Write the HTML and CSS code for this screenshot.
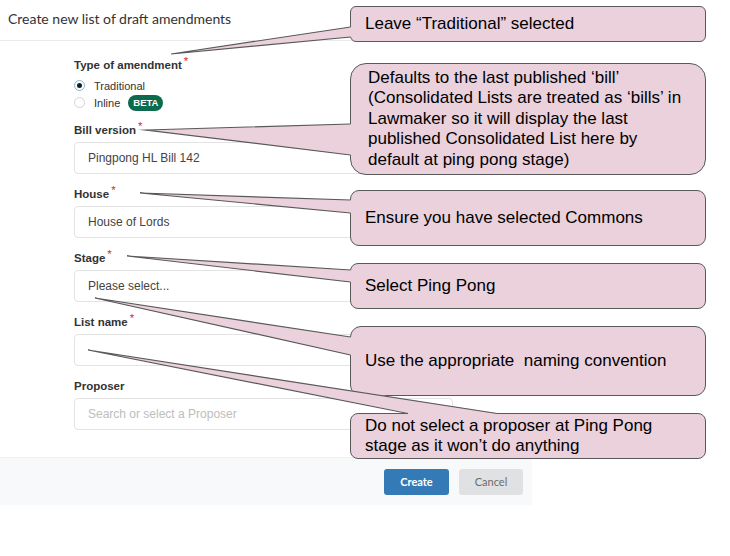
FILE: index.html
```html
<!DOCTYPE html>
<html lang="en">
<head>
  <meta charset="UTF-8">
  <meta name="viewport" content="width=device-width, initial-scale=1.0">
  <title>Create new list of draft amendments</title>
  <link rel="stylesheet" href="styles.css">
</head>
<body>
  <div class="modal">
    <div class="modal-header">
      <h1 class="modal-title">Create new list of draft amendments</h1>
    </div>

    <div class="modal-body">
      <!-- Type of amendment -->
      <div class="field field-radios">
        <div class="field-label">Type of amendment<span class="req">*</span></div>
        <div class="radio-row"><span class="radio checked"></span>Traditional</div>
        <div class="radio-row"><span class="radio"></span>Inline<span class="badge">BETA</span></div>
      </div>

      <div class="field">
        <div class="field-label">Bill version<span class="req">*</span></div>
        <div class="input">Pingpong HL Bill 142</div>
      </div>

      <div class="field">
        <div class="field-label">House<span class="req">*</span></div>
        <div class="input">House of Lords</div>
      </div>

      <div class="field">
        <div class="field-label">Stage<span class="req">*</span></div>
        <div class="input">Please select...</div>
      </div>

      <div class="field">
        <div class="field-label">List name<span class="req">*</span></div>
        <div class="input"></div>
      </div>

      <div class="field">
        <div class="field-label">Proposer</div>
        <div class="input placeholder">Search or select a Proposer</div>
      </div>
    </div>

    <div class="modal-footer">
      <button class="btn btn-primary">Create</button>
      <button class="btn btn-secondary">Cancel</button>
    </div>
  </div>

  <!-- Annotation callouts -->
  <div class="notes">
    <div class="note note-1">Leave “Traditional” selected</div>
    <div class="note note-2">Defaults to the last published ‘bill’<br>(Consolidated Lists are treated as ‘bills’ in<br>Lawmaker so it will display the last<br>published Consolidated List here by<br>default at ping pong stage)</div>
    <div class="note note-3">Ensure you have selected Commons</div>
    <div class="note note-4">Select Ping Pong</div>
    <div class="note note-5">Use the appropriate&nbsp; naming convention</div>
    <div class="note note-6">Do not select a proposer at Ping Pong<br>stage as it won’t do anything</div>

    <svg class="tails" width="730" height="556" viewBox="0 0 730 556">
      <g class="tail-fill">
        <polygon points="171,54 350,27 353,27 353,37 350,37"/>
        <polygon points="146,130 350,124 353,124 353,155 350,155"/>
        <polygon points="140,193 350,200 353,200 353,213 350,213"/>
        <polygon points="127,256 350,270 353,270 353,282 350,282"/>
        <polygon points="95,298 350,337 353,337 353,355 350,355"/>
        <polygon points="88,350 408,413 408,416 497,416 497,413"/>
      </g>
      <g class="tail-line">
        <polyline points="350.5,27 171,54 350.5,37"/>
        <polyline points="350.5,124 146,130 350.5,155"/>
        <polyline points="350.5,200 140,193 350.5,213"/>
        <polyline points="350.5,270 127,256 350.5,282"/>
        <polyline points="350.5,337 95,298 350.5,355"/>
        <polyline points="408,413.5 88,350 497,413.5"/>
      </g>
    </svg>
  </div>
</body>
</html>
```

FILE: styles.css
```css
/* General Styles */
body {
  margin: 0;
  padding: 0;
  background-color: #fff;
  color: #333;
  font-family: "Liberation Sans", Arial, sans-serif;
}

.modal {
  width: 532px;
}

.modal-header {
  height: 41px;
  border-bottom: 1px solid #ebebeb;
  box-sizing: border-box;
}

.modal-title {
  margin: 0;
  padding-left: 8px;
  font-family: Lato, "Liberation Sans", sans-serif;
  font-size: 14px;
  font-weight: 400;
  line-height: 38px;
  color: #333;
}

.modal-body {
  padding: 16px 79px 15px 74px;
}

/* Form fields */
.field {
  margin-bottom: 12px;
}

.field-radios {
  margin-bottom: 11px;
}

.field-label {
  font-size: 11.5px;
  font-weight: bold;
  line-height: 16px;
  margin-bottom: 4px;
  color: #333;
}

.req {
  position: relative;
  top: -4px;
  margin-left: 2px;
  color: #db2828;
  font-weight: normal;
}

.radio-row {
  display: flex;
  align-items: center;
  height: 17px;
  font-size: 11px;
  color: #333;
}

.radio {
  width: 11px;
  height: 11px;
  margin-right: 9px;
  border: 1px solid #d4d4d5;
  border-radius: 50%;
  box-sizing: border-box;
  position: relative;
}

.radio.checked {
  border-color: #85b7d9;
}

.radio.checked::after {
  content: "";
  position: absolute;
  top: 2px;
  left: 2px;
  width: 5px;
  height: 5px;
  border-radius: 50%;
  background: #1b1c1d;
}

.badge {
  margin-left: 8px;
  padding: 0 5px;
  height: 16px;
  line-height: 16px;
  border-radius: 8px;
  background: #0b6b4c;
  color: #fff;
  font-size: 9.5px;
  font-weight: bold;
}

.input {
  height: 32px;
  box-sizing: border-box;
  border: 1px solid #e3e3e3;
  border-radius: 4px;
  padding: 0 13px;
  font-size: 12px;
  line-height: 30px;
  color: #444;
}

.input.placeholder {
  color: #bdbdbd;
}

/* Footer */
.modal-footer {
  display: flex;
  justify-content: flex-end;
  align-items: center;
  gap: 10px;
  height: 48px;
  padding-right: 9px;
  background: #f8f9fa;
  border-top: 1px solid #eef0f2;
  box-sizing: border-box;
}

.btn {
  width: 65px;
  height: 26px;
  border: none;
  border-radius: 3px;
  font-family: Lato, "Liberation Sans", sans-serif;
  font-size: 11px;
  font-weight: bold;
  cursor: pointer;
}

.btn-primary {
  background: #337ab7;
  color: #fff;
}

.btn-secondary {
  width: 64px;
  background: #e0e1e2;
  color: #6b6b6b;
  font-weight: normal;
}

/* Annotation callouts */
.notes {
  position: absolute;
  top: 0;
  left: 0;
  width: 730px;
  height: 556px;
  pointer-events: none;
}

.note {
  position: absolute;
  left: 350px;
  width: 356px;
  box-sizing: border-box;
  display: flex;
  align-items: center;
  padding: 0 14px;
  border: 1.3px solid #595959;
  background: #ead1dc;
  color: #000;
  font-size: 17px;
  line-height: 20.5px;
  white-space: nowrap;
}

.note-1 { top: 6px; height: 36px; border-radius: 6px; }
.note-2 { top: 63px; height: 112px; border-radius: 16px; padding-left: 17px; }
.note-3 { top: 190px; height: 56px; border-radius: 9px; }
.note-4 { top: 263px; height: 46px; border-radius: 8px; }
.note-5 { top: 326px; height: 70px; border-radius: 11px; }
.note-6 { top: 413px; height: 46px; border-radius: 8px; }

.tails {
  position: absolute;
  top: 0;
  left: 0;
}

.tail-fill polygon {
  fill: #ead1dc;
}

.tail-line polyline {
  fill: none;
  stroke: #595959;
  stroke-width: 1.2;
  stroke-linejoin: miter;
  stroke-miterlimit: 20;
}
```
